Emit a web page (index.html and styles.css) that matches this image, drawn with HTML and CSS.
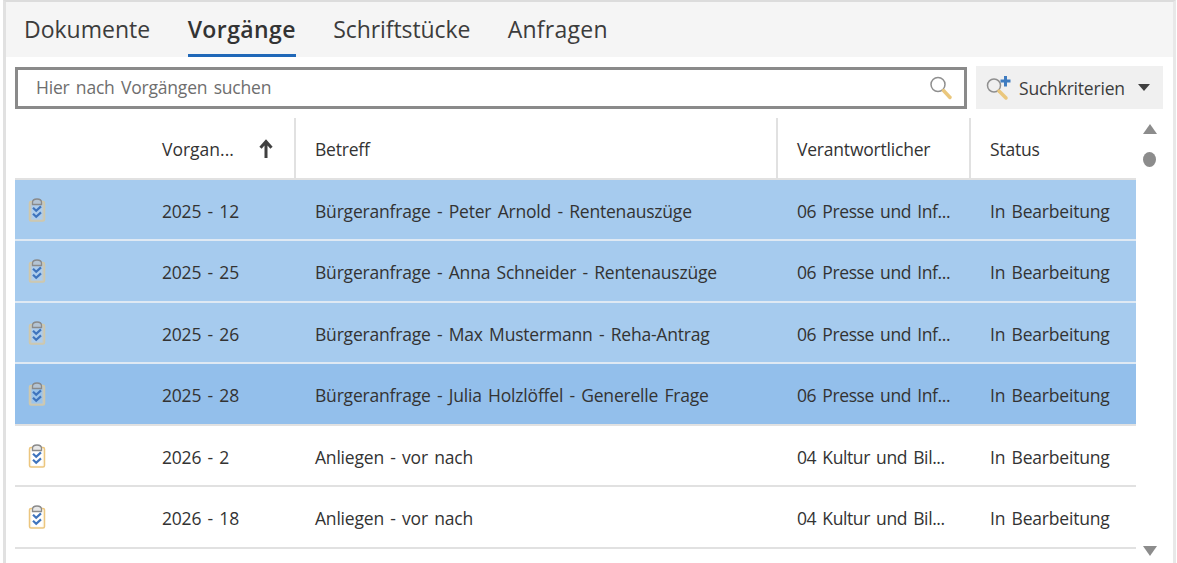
FILE: index.html
```html
<!DOCTYPE html>
<html lang="de">
<head>
<meta charset="utf-8">
<title>Vorgänge</title>
<link rel="stylesheet" href="styles.css">
</head>
<body>
<svg class="defs" width="0" height="0" aria-hidden="true">
  <symbol id="clip" viewBox="0 0 18 24">
    <rect class="clip-board" x="1.500" y="3.500" width="15" height="19.500" rx="1.500"/>
    <rect class="clip-paper" x="3.500" y="6.500" width="11" height="15"/>
    <path class="clip-top" d="M4.500 6.500V4.500C4.500 2.300 6.500 1 9 1s4.500 1.300 4.500 3.500V6.500Z"/>
    <path class="clip-check" d="M5 9.800l3.200 3 4.800-4.400M5 15.800l3.200 3 4.800-4.400"/>
  </symbol>
</svg>
<main class="frame">
  <nav class="tabs">
    <span class="tab">Dokumente</span>
    <span class="tab tab-active">Vorgänge</span>
    <span class="tab tab-third">Schriftstücke</span>
    <span class="tab tab-last">Anfragen</span>
  </nav>
  <div class="searchbar">
    <div class="search">
      <span class="search-text">Hier nach Vorgängen suchen</span>
      <svg class="search-icon" width="26" height="26" viewBox="0 0 26 26">
        <circle cx="10" cy="9.500" r="7" fill="none" stroke="#8f8f8f" stroke-width="1.500"/>
        <path d="M15.500 15.500l6.500 7" stroke="#eac77c" stroke-width="3.500" stroke-linecap="round"/>
      </svg>
    </div>
    <button class="criteria">
      <svg width="28" height="28" viewBox="0 0 28 28">
        <circle cx="8" cy="11.500" r="6.500" fill="none" stroke="#8f8f8f" stroke-width="1.500"/>
        <path d="M13 17l7 7" stroke="#eac77c" stroke-width="3.500" stroke-linecap="round"/>
        <path d="M19.500 2v10.500M14.500 7h10" stroke="#3f7cc0" stroke-width="3"/>
      </svg>
      <span>Suchkriterien</span>
      <i class="caret"></i>
    </button>
  </div>
  <div class="content">
    <div class="table">
      <div class="row head">
        <div class="cell"></div>
        <div class="cell sort"><span>Vorgan...</span><svg width="14" height="20" viewBox="0 0 14 20"><path d="M7 19V3M1.500 8.800L7 2.500l5.500 6.300" fill="none" stroke="#404040" stroke-width="3"/></svg></div>
        <div class="cell div">Betreff</div>
        <div class="cell div">Verantwortlicher</div>
        <div class="cell div">Status</div>
      </div>
      <div class="row sel">
        <div class="cell"><svg class="ico"><use href="#clip"/></svg></div>
        <div class="cell">2025 - 12</div>
        <div class="cell">Bürgeranfrage - Peter Arnold - Rentenauszüge</div>
        <div class="cell trunc">06 Presse und Inf...</div>
        <div class="cell">In Bearbeitung</div>
      </div>
      <div class="row sel">
        <div class="cell"><svg class="ico"><use href="#clip"/></svg></div>
        <div class="cell">2025 - 25</div>
        <div class="cell">Bürgeranfrage - Anna Schneider - Rentenauszüge</div>
        <div class="cell trunc">06 Presse und Inf...</div>
        <div class="cell">In Bearbeitung</div>
      </div>
      <div class="row sel">
        <div class="cell"><svg class="ico"><use href="#clip"/></svg></div>
        <div class="cell">2025 - 26</div>
        <div class="cell">Bürgeranfrage - Max Mustermann - Reha-Antrag</div>
        <div class="cell trunc">06 Presse und Inf...</div>
        <div class="cell">In Bearbeitung</div>
      </div>
      <div class="row sel focus">
        <div class="cell"><svg class="ico"><use href="#clip"/></svg></div>
        <div class="cell">2025 - 28</div>
        <div class="cell">Bürgeranfrage - Julia Holzlöffel - Generelle Frage</div>
        <div class="cell trunc">06 Presse und Inf...</div>
        <div class="cell">In Bearbeitung</div>
      </div>
      <div class="row">
        <div class="cell"><svg class="ico"><use href="#clip"/></svg></div>
        <div class="cell">2026 - 2</div>
        <div class="cell">Anliegen - vor nach</div>
        <div class="cell trunc">04 Kultur und Bil...</div>
        <div class="cell">In Bearbeitung</div>
      </div>
      <div class="row">
        <div class="cell"><svg class="ico"><use href="#clip"/></svg></div>
        <div class="cell">2026 - 18</div>
        <div class="cell">Anliegen - vor nach</div>
        <div class="cell trunc">04 Kultur und Bil...</div>
        <div class="cell">In Bearbeitung</div>
      </div>
    </div>
    <div class="scroll">
      <i class="up"></i>
      <i class="thumb"></i>
      <i class="down"></i>
    </div>
  </div>
</main>
</body>
</html>
```
FILE: styles.css
```css
* { box-sizing: border-box; }
html, body { margin: 0; height: 563px; overflow: hidden; background: #fff; }
body { font-family: "Open Sans", "Noto Sans", sans-serif; color: #333; font-size: 18px; }
.defs { position: absolute; }
.frame {
  height: 563px;
  width: 1173px;
  margin-left: 3px;
  border-top: 2px solid #dcdcdc;
  border-left: 3px solid #e1e1e1;
  border-right: 3px solid #e8e8e8;
  display: flex;
  flex-direction: column;
}
.tabs {
  height: 55px;
  background: #f5f5f5;
  display: flex;
  gap: 37.500px;
  padding-left: 18px;
}
.tab {
  height: 55px;
  padding-top: 9px;
  font-size: 23px;
  line-height: 36px;
  color: #3c3c3c;
}
.tab-active { font-weight: 600; color: #333; letter-spacing: 0.4px; border-bottom: 3px solid #2068b8; }
.tab-third { letter-spacing: -0.1px; }
.tab-last { letter-spacing: 0.25px; }
.searchbar {
  display: flex;
  gap: 9px;
  padding: 9px 0 0 9px;
  height: 61px;
  flex: none;
}
.search {
  width: 952px;
  height: 42px;
  margin-top: 1px;
  border: 3px solid #8a8a8a;
  display: flex;
  align-items: center;
  justify-content: space-between;
  padding: 0 10px 0 18px;
}
.search-text {
  font-size: 17.500px;
  color: #6e6e6e;
  letter-spacing: -0.2px;
  word-spacing: 2px;
  padding-bottom: 2px;
}
.criteria {
  width: 187px;
  height: 43px;
  border: 0;
  background: #f0f0f0;
  font: inherit;
  font-size: 17.500px;
  letter-spacing: -0.2px;
  color: #3c3c3c;
  display: flex;
  align-items: center;
  padding: 0 13px 0 10px;
  gap: 5px;
}
.caret {
  margin-left: auto;
  border: 6px solid transparent;
  border-top: 7px solid #404040;
  border-bottom: 0;
}
.content { display: flex; padding-left: 9px; flex: 1; min-height: 0; }
.table { width: 1121px; flex: none; }
.row {
  --board: #fdf7ea;
  --board-line: #ecc67f;
  --paper: #fff;
  --clip: #e8e8e8;
  display: grid;
  grid-template-columns: 147px 134px 482px 193px 165px;
  height: 61.500px;
  padding-top: 2.600px;
  border-bottom: 2px solid #e1e1e1;
  letter-spacing: -0.2px;
  word-spacing: 2px;
  font-size: 17.500px;
}
.head {
  grid-template-columns: 147px 132px 482px 193px 167px;
  padding-top: 0;
  border-bottom-width: 2.500px;
}
.cell {
  display: flex;
  align-items: center;
  white-space: nowrap;
  min-width: 0;
  padding-right: 4px;
}
.row > .cell:nth-child(n+3) { padding-left: 19px; }
.row > .cell:first-child { padding-left: 13px; }
.row > .trunc { letter-spacing: -0.4px; }
.head > .cell { padding-top: 3px; }
.head > .div { padding-left: 18px; border-left: 2px solid #e1e1e1; padding-top: 3px; }
.sort { justify-content: space-between; padding-right: 21px; letter-spacing: 0; }
.sel {
  background: #a6cbee;
  border-bottom-color: #dfe9f3;
  --board: #c4c9c4;
  --board-line: #cfc8ab;
  --paper: #aecdec;
  --clip: #b4c4d4;
}
.focus { background: #93bfeb; border-bottom-color: #e1e1e1; --paper: #9cc4ea; }
.ico { width: 18px; height: 24px; margin-top: -2px; }
.clip-board { fill: var(--board); stroke: var(--board-line); stroke-width: 1.500; }
.clip-paper { fill: var(--paper); }
.clip-top { fill: var(--clip); stroke: #8a8a8a; stroke-width: 1.300; }
.clip-check { fill: none; stroke: #3f74bd; stroke-width: 2.200; }
.scroll {
  width: 27px;
  display: flex;
  flex-direction: column;
  align-items: center;
  padding-top: 6px;
  height: 438px;
}
.up { border: 7px solid transparent; border-bottom: 10px solid #8c8c8c; border-top: 0; }
.thumb { width: 13px; height: 15px; border-radius: 50%; background: #8c8c8c; margin-top: 18px; }
.down { border: 7px solid transparent; border-top: 10px solid #8c8c8c; border-bottom: 0; margin-top: auto; }
```
